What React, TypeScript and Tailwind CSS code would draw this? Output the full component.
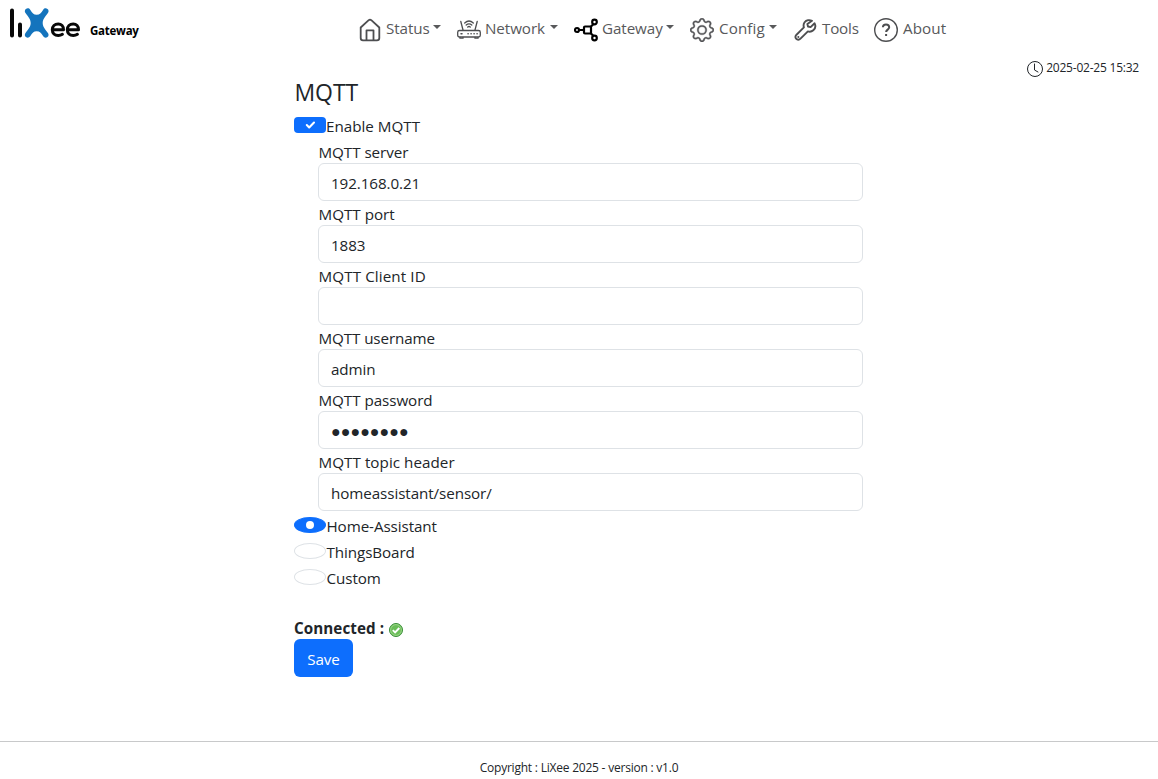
import type { ReactNode } from 'react';

const Logo = () => (
  <svg className="h-[34px] w-[74px]" viewBox="0 0 74 34" fill="none" strokeLinecap="round">
    <path d="M5 3.500v25M13 17.500v11" stroke="#080808" strokeWidth="4" />
    <path d="M19.700 1.900c1.600-1.100 3.300-.7 4.300.8 2.200 3.300 3.300 5 6.500 5s4.300-1.700 6.500-5c1-1.500 2.700-1.900 4.300-.8 1.300 1 1.400 2.700.4 4.100-3 4.200-5.200 6.200-5.200 10s2.200 5.800 5.200 10c1 1.400.9 3.100-.4 4.100-1.600 1.100-3.300.7-4.300-.8-2.200-3.300-3.300-5-6.500-5s-4.300 1.700-6.500 5c-1 1.500-2.700 1.900-4.300.8-1.300-1-1.400-2.700-.4-4.100 3-4.200 5.200-6.200 5.200-10s-2.200-5.800-5.200-10c-1-1.400-.9-3.100.4-4.100z" transform="translate(-.8 0)" fill="#1474bd" />
    <path d="M45.500 22.700h11c0-3.300-2.100-5.700-5.300-5.700-3.500 0-5.900 2.400-5.900 5.800s2.400 5.700 6 5.700c1.600 0 2.900-.4 4.100-1.200M60.500 22.700h11c0-3.300-2.100-5.700-5.300-5.700-3.500 0-5.900 2.400-5.900 5.800s2.400 5.700 6 5.700c1.600 0 2.900-.4 4.100-1.200" stroke="#080808" strokeWidth="3" strokeLinejoin="round" />
  </svg>
);

const HomeIcon = () => (
  <svg className="size-6" viewBox="0 0 24 24" fill="none" stroke="#4d4e50" strokeWidth="1.800" strokeLinejoin="round">
    <path d="M2.700 9.500 10.700 2.200q1.300-1 2.600 0L21.300 9.500V20q0 2.300-2.300 2.300H5Q2.700 22.300 2.700 20z" />
    <path d="M8.500 22.300v-10h7v10" />
  </svg>
);

const RouterIcon = () => (
  <svg className="size-6" viewBox="0 0 24 24" fill="none" stroke="#4d4e50" strokeWidth="1.300" strokeLinecap="round">
    <rect x=".7" y="12.500" width="22.600" height="6.500" rx="1.800" />
    <path d="M6 12 3.800 3.500M18 12l2.200-8.500M3 19.500v.7h3v-.7M18 19.500v.7h3v-.7" />
    <path d="M7.700 5Q12 1 16.300 5M9.200 7q2.800-2.300 5.600 0M10.700 9q1.300-1 2.600 0" />
    <path d="M4 15.800h1M11 15.800h.2M14 15.800h.2M17 15.800h.2M20 15.800h.2" strokeWidth="1.500" />
  </svg>
);

const GatewayIcon = () => (
  <svg className="size-6" viewBox="0 0 24 24" fill="none" stroke="#000" strokeWidth="2.200">
    <circle cx="3" cy="12" r="2" />
    <rect x="10" y="8.500" width="7" height="7" rx="1" />
    <circle cx="20.500" cy="4" r="2.300" />
    <circle cx="20.500" cy="20" r="2.300" />
    <path d="M5 12h5M16.500 9l3-3M16.500 15l3 3" />
  </svg>
);

const GearIcon = () => (
  <svg className="size-6" viewBox="0 0 16 16" fill="#555658" stroke="#555658" strokeWidth=".2">
    <path d="M8 4.754a3.246 3.246 0 1 0 0 6.492 3.246 3.246 0 0 0 0-6.492M5.754 8a2.246 2.246 0 1 1 4.492 0 2.246 2.246 0 0 1-4.492 0" />
    <path d="M9.796 1.343c-.527-1.790-3.065-1.790-3.592 0l-.094.319a.873.873 0 0 1-1.255.520l-.292-.160c-1.640-.892-3.433.902-2.540 2.541l.159.292a.873.873 0 0 1-.520 1.255l-.319.094c-1.790.527-1.790 3.065 0 3.592l.319.094a.873.873 0 0 1 .520 1.255l-.160.292c-.892 1.640.901 3.434 2.541 2.540l.292-.159a.873.873 0 0 1 1.255.520l.094.319c.527 1.790 3.065 1.790 3.592 0l.094-.319a.873.873 0 0 1 1.255-.520l.292.160c1.640.893 3.434-.902 2.540-2.541l-.159-.292a.873.873 0 0 1 .520-1.255l.319-.094c1.790-.527 1.790-3.065 0-3.592l-.319-.094a.873.873 0 0 1-.520-1.255l.160-.292c.893-1.640-.902-3.433-2.541-2.540l-.292.159a.873.873 0 0 1-1.255-.520zm-2.633.283c.246-.835 1.428-.835 1.674 0l.094.319a1.873 1.873 0 0 0 2.693 1.115l.291-.160c.764-.415 1.600.420 1.184 1.185l-.159.292a1.873 1.873 0 0 0 1.116 2.692l.318.094c.835.246.835 1.428 0 1.674l-.319.094a1.873 1.873 0 0 0-1.115 2.693l.160.291c.415.764-.420 1.600-1.185 1.184l-.291-.159a1.873 1.873 0 0 0-2.693 1.116l-.094.318c-.246.835-1.428.835-1.674 0l-.094-.319a1.873 1.873 0 0 0-2.692-1.115l-.292.160c-.764.415-1.600-.420-1.184-1.185l.159-.291A1.873 1.873 0 0 0 1.945 8.930l-.319-.094c-.835-.246-.835-1.428 0-1.674l.319-.094A1.873 1.873 0 0 0 3.060 4.377l-.160-.292c-.415-.764.420-1.600 1.185-1.184l.292.159a1.873 1.873 0 0 0 2.692-1.115z" />
  </svg>
);

const WrenchIcon = () => (
  <svg className="size-6" viewBox="0 0 24 24" fill="none" stroke="#4d4e50" strokeWidth="1.900" strokeLinejoin="round" strokeLinecap="round">
    <path d="M19 2.800C16.500 1.500 13.300 2 11.600 4.300c-1.200 1.700-1.300 3.300-.7 5.100L3.500 16.700c-1.300 1.400-1.200 3.100-.2 4.200s2.900 1.100 4.200-.2l7.400-7.300c1.900.6 3.800.3 5.400-1.100 2.100-1.800 2.500-4.600 1.300-7l-4 3.800-2.600-.6-.6-2.500z" />
    <path d="M5.300 19h.1" />
  </svg>
);

const HelpIcon = () => (
  <svg className="size-6" viewBox="0 0 24 24" fill="none" stroke="#4d4e50">
    <circle cx="12" cy="12" r="11.300" strokeWidth="1.400" />
    <path d="M8.900 9.300c0-1.700 1.300-2.800 3.100-2.800s3.200 1.100 3.200 2.800c0 2.200-3.100 2.400-3.100 4.700M12.100 16v2" strokeWidth="2" />
  </svg>
);

const ClockIcon = () => (
  <svg className="size-4" viewBox="0 0 16 16" fill="none" stroke="#212529">
    <circle cx="8" cy="8" r="7.500" />
    <path d="M7.500 3v6l3.500 2" strokeLinecap="round" />
  </svg>
);

const OkIcon = () => (
  <svg className="mt-[4px] size-[14px]" viewBox="0 0 14 14" fill="none">
    <circle cx="7" cy="7" r="6.500" fill="#6abd58" stroke="#398c38" />
    <circle cx="7" cy="7" r="5.400" stroke="#a7dc94" strokeWidth=".8" />
    <path d="m3.800 7.200 2.300 2.300 4.200-4.500" stroke="#fff" strokeWidth="1.900" />
  </svg>
);

type NavItemProps = { icon: ReactNode; label: string; width: string; caret?: boolean };

const NavItem = ({ icon, label, width, caret }: NavItemProps) => (
  <a className="flex h-6 items-center" href="#">
    <span className="mt-[3px] mr-1 size-6 shrink-0">{icon}</span>
    <span className={`${width} shrink-0 whitespace-nowrap`}>{label}</span>
    {caret && <span className="mb-[3px] ml-1 border-x-4 border-t-4 border-x-transparent border-t-[#58595b]" />}
  </a>
);

const fields = [
  { label: 'MQTT server', value: '192.168.0.21', tracking: 'tracking-[-0.05px]', valueClass: '' },
  { label: 'MQTT port', value: '1883', tracking: 'tracking-[0px]', valueClass: '' },
  { label: 'MQTT Client ID', value: '', tracking: 'tracking-[0.1px]', valueClass: '' },
  { label: 'MQTT username', value: 'admin', tracking: 'tracking-[-0.1px]', valueClass: '' },
  { label: 'MQTT password', value: '●●●●●●●●', tracking: 'tracking-[-0.05px]', valueClass: 'text-[16px] tracking-[0.05px]' },
  { label: 'MQTT topic header', value: 'homeassistant/sensor/', tracking: 'tracking-[0.05px]', valueClass: '' },
];

const Radio = ({ label, checked }: { label: string; checked?: boolean }) => (
  <label className="flex h-[26px]">
    <span
      className={`mt-[4px] flex h-4 w-8 items-center justify-center rounded-[50%] border ${
        checked ? 'border-[#0d6efd] bg-[#0d6efd]' : 'border-[#dee2e6] bg-white'
      }`}
    >
      {checked && <span className="size-2 rounded-full bg-white" />}
    </span>
    <span className="pl-[0.5px] leading-[26px]">{label}</span>
  </label>
);

export default function App() {
  return (
    <div className="flex h-[779px] flex-col bg-white font-['Open_Sans','Noto_Sans',sans-serif] text-[15.200px] leading-6 tracking-[-0.08px] text-[#212529]">
      <header className="flex h-[58px] shrink-0">
        <div className="flex w-[358px] pt-[7px] pl-[7px]">
          <Logo />
          <span className="mt-[12px] ml-[9px] text-[11.500px] font-bold tracking-[-0.25px] text-black">Gateway</span>
        </div>
        <nav className="flex gap-4 pt-[16px] text-[#58595b]">
          <NavItem icon={<HomeIcon />} label="Status" width="w-[43px]" caret />
          <NavItem icon={<RouterIcon />} label="Network" width="w-[61px]" caret />
          <NavItem icon={<GatewayIcon />} label="Gateway" width="w-[60px]" caret />
          <NavItem icon={<GearIcon />} label="Config" width="w-[47px] pl-px tracking-[0.1px]" caret />
          <NavItem icon={<WrenchIcon />} label="Tools" width="w-[37px] pl-px tracking-[-0.2px]" />
          <NavItem icon={<HelpIcon />} label="About" width="w-[44px] pl-px tracking-[0.1px]" />
        </nav>
      </header>
      <div className="flex h-[20px] shrink-0 justify-end pr-[19px] text-[12px] leading-5 tracking-[-0.22px]">
        <span className="mt-[3px] mr-[3px]"><ClockIcon /></span>
        <time>2025-02-25 15:32</time>
      </div>
      <main className="ml-[294px] flex w-[569px] flex-col">
        <h1 className="h-[35px] pl-[0.5px] text-[23px] leading-[29px] tracking-[-0.1px]">MQTT</h1>
        <label className="flex h-[28px]">
          <span className="mt-[4px] flex h-4 w-8 items-center justify-center rounded bg-[#0d6efd]">
            <svg className="size-4" viewBox="0 0 20 20" fill="none">
              <path d="m6 10 3 3 6-6" stroke="#fff" strokeWidth="2.600" strokeLinecap="round" strokeLinejoin="round" />
            </svg>
          </span>
          <span className="leading-[26px] tracking-[0px]">Enable MQTT</span>
        </label>
        <div className="flex flex-col pl-6">
          {fields.map((field) => (
            <label key={field.label} className="block h-[62px]">
              <span className={`block h-[22px] pl-[0.5px] leading-[22px] ${field.tracking}`}>{field.label}</span>
              <span className="flex h-[38px] items-center rounded-md border border-[#dee2e6] pt-px pl-3">
                <span className={field.valueClass}>{field.value}</span>
              </span>
            </label>
          ))}
        </div>
        <div className="flex flex-col">
          <Radio label="Home-Assistant" checked />
          <Radio label="ThingsBoard" />
          <Radio label="Custom" />
        </div>
        <div className="mt-[25px] flex h-[23px] items-center">
          <b className="mr-[5px] tracking-[0.08px]">Connected :</b>
          <OkIcon />
        </div>
        <button className="h-[38px] w-[59px] rounded-md bg-[#0d6efd] pt-px text-white">Save</button>
      </main>
      <footer className="mt-auto h-[38px] border-t border-[#c8c9ca] pt-[16px] text-center text-[12px] leading-5 tracking-[-0.22px]">
        Copyright : LiXee 2025 - version : v1.0
      </footer>
    </div>
  );
}
